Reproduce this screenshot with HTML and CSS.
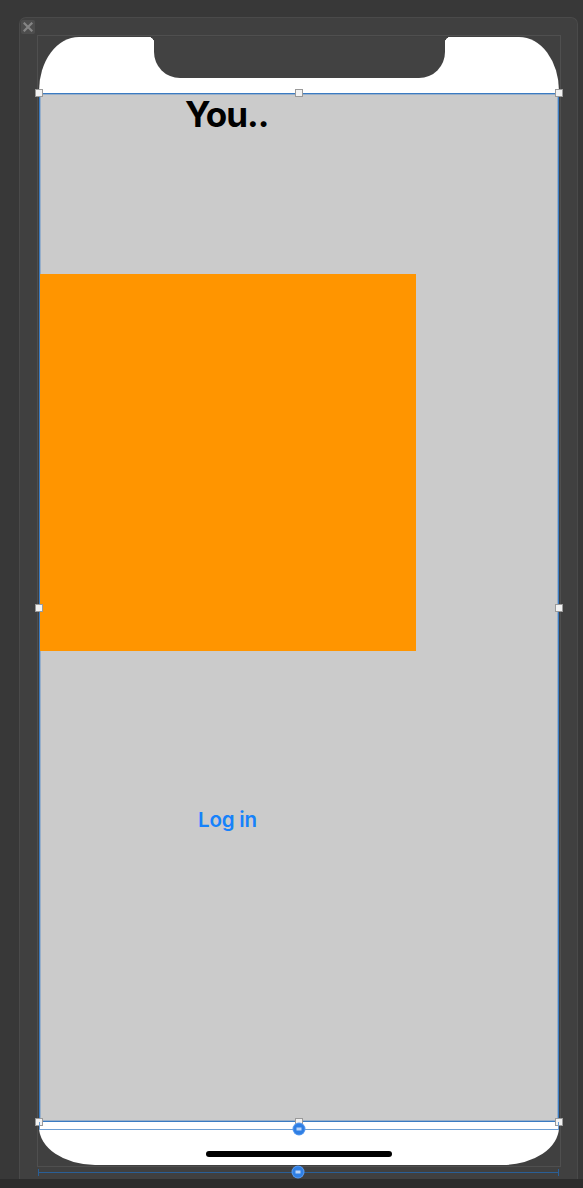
FILE: index.html
```html
<!DOCTYPE html>
<html>
<head>
<meta charset="utf-8">
<link rel="stylesheet" href="styles.css">
</head>
<body>
<div class="canvas">
  <div class="panel">
    <div class="close">
      <svg width="10" height="10" viewBox="0 0 10 10"><path d="M1.5 1.5 L8.5 8.5 M8.5 1.5 L1.5 8.5" stroke="#858585" stroke-width="2.2" stroke-linecap="square"/></svg>
    </div>
    <div class="frame">
      <div class="phone">
        <div class="top">
          <div class="notch"></div>
        </div>
        <div class="view">
          <div class="title">You..</div>
          <div class="orange"></div>
          <div class="login">Log in</div>
          <span class="h tl"></span><span class="h tc"></span><span class="h tr"></span>
          <span class="h ml"></span><span class="h mr"></span>
          <span class="h bl"></span><span class="h bc"></span><span class="h br"></span>
        </div>
        <div class="safe">
          <span class="knob"></span>
        </div>
        <div class="home-area">
          <div class="home"></div>
        </div>
      </div>
    </div>
    <div class="ruler">
      <span class="knob"></span>
    </div>
  </div>
</div>
</body>
</html>
```
FILE: styles.css
```css
html, body {
  margin: 0;
  padding: 0;
}
body {
  background: #2c2c2c;
  width: 583px;
  height: 1188px;
  overflow: hidden;
  font-family: Inter, "Liberation Sans", sans-serif;
}
.canvas {
  background: #383838;
  height: 1179px;
  padding: 17px 0 0 19px;
  box-sizing: border-box;
}
.panel {
  position: relative;
  width: 559px;
  height: 1162px;
  box-sizing: border-box;
  background: #404040;
  border: 1px solid #4a4a4a;
  border-bottom: none;
  border-radius: 7px 7px 0 0;
  padding: 17px 0 0 17px;
}
.close {
  position: absolute;
  top: 2px;
  left: 1px;
  width: 14px;
  height: 14px;
  background: #4d4d4d;
  border-radius: 2px;
  display: flex;
  align-items: center;
  justify-content: center;
}
.frame {
  width: 524px;
  height: 1132px;
  box-sizing: border-box;
  border: 1px solid #4f4f4f;
  padding: 1px;
}
.phone {
  width: 520px;
  height: 1128px;
  background: #ffffff;
  border-radius: 40px 40px 56px 56px / 54px 54px 38px 38px;
  display: flex;
  flex-direction: column;
}
.top {
  height: 56px;
  display: flex;
  justify-content: center;
}
.notch {
  position: relative;
  width: 291px;
  height: 41px;
  background: #424242;
  border-radius: 0 0 26px 26px;
}
.notch::before,
.notch::after {
  content: "";
  position: absolute;
  top: 0;
  width: 6px;
  height: 6px;
}
.notch::before {
  left: -6px;
  background: radial-gradient(circle at 0 100%, transparent 6px, #424242 6.5px);
}
.notch::after {
  right: -6px;
  background: radial-gradient(circle at 100% 100%, transparent 6px, #424242 6.5px);
}
.view {
  position: relative;
  height: 1029px;
  box-sizing: border-box;
  background: #cbcbcb;
  border: 1px solid #3a7bc2;
  box-shadow: inset 0 0 0 1px rgba(90, 143, 199, 0.45);
  display: flex;
  flex-direction: column;
  align-items: flex-start;
}
.title {
  margin: 3px 0 0 145px;
  font-size: 35px;
  line-height: 35px;
  font-weight: 700;
  letter-spacing: -1px;
  color: #000;
}
.orange {
  margin-top: 142px;
  width: 376px;
  height: 377px;
  background: #ff9500;
}
.login {
  margin: 158px 0 0 158px;
  font-size: 20.5px;
  line-height: 21px;
  font-weight: 600;
  letter-spacing: -0.2px;
  color: #1682fb;
}
.h {
  position: absolute;
  width: 6px;
  height: 6px;
  background: #f2f2f2;
  border: 1px solid #9a9a9a;
  transform: translate(-50%, -50%);
}
.tl { left: -1px; top: -1px; }
.tc { left: 50%; top: -1px; }
.tr { left: calc(100% + 1px); top: -1px; }
.ml { left: -1px; top: 50%; }
.mr { left: calc(100% + 1px); top: 50%; }
.bl { left: -1px; top: calc(100% + 1px); }
.bc { left: 50%; top: calc(100% + 1px); }
.br { left: calc(100% + 1px); top: calc(100% + 1px); }
.safe {
  position: relative;
  height: 8px;
  border-bottom: 1px solid #6f9fd3;
  border-left: 1px solid #6f9fd3;
  border-right: 1px solid #6f9fd3;
  box-sizing: border-box;
}
.knob {
  position: absolute;
  left: 259px;
  top: 100%;
  width: 11px;
  height: 11px;
  border-radius: 50%;
  background: #2f7fe4;
  box-shadow: 0 0 0 1px #5a9bef;
  transform: translate(-50%, -50%);
}
.knob::after {
  content: "";
  position: absolute;
  left: 3px;
  top: 4px;
  width: 5px;
  height: 3px;
  background: #b9d4f7;
}
.home-area {
  flex: 1;
  display: flex;
  justify-content: center;
  padding-top: 21px;
}
.home {
  width: 186px;
  height: 6px;
  border-radius: 3px;
  background: #000;
}
.ruler {
  position: relative;
  margin: 5px 0 0 1px;
  width: 521px;
  height: 1px;
  background: #2a5f96;
}
.ruler::before,
.ruler::after {
  content: "";
  position: absolute;
  top: -3px;
  width: 1px;
  height: 7px;
  background: #2a5f96;
}
.ruler::before { left: 0; }
.ruler::after { right: 0; }
.ruler .knob {
  left: 260px;
  top: 0;
  transform: translate(-50%, -50%);
}
```
